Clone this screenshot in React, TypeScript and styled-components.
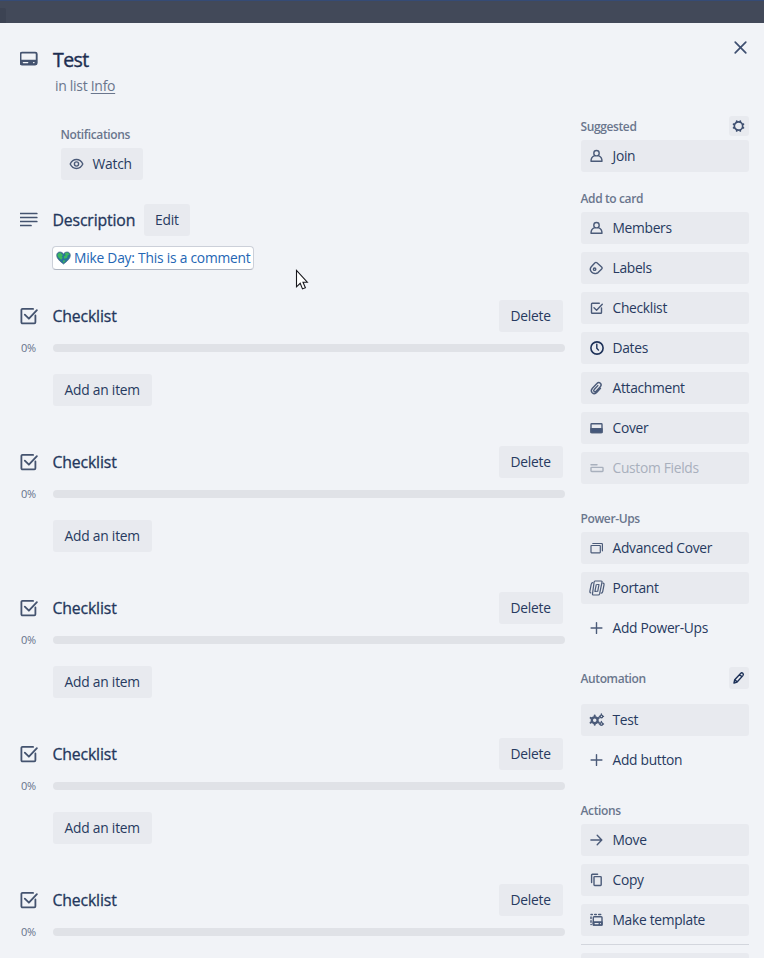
import React from 'react';
import styled, { createGlobalStyle, css } from 'styled-components';

const GlobalStyle = createGlobalStyle`
  *, *::before, *::after { box-sizing: border-box; }
  html, body { margin: 0; padding: 0; }
  body {
    background: #f1f3f7;
    color: #24375c;
    font-family: "Open Sans", "Noto Sans", sans-serif;
    font-size: 13.8px;
    line-height: 20px;
    overflow: hidden;
  }
`;

const Page = styled.div`
  position: relative;
  width: 764px;
  height: 958px;
  overflow: hidden;
  background: #f1f3f7;
`;

const Backdrop = styled.div`
  height: 23px;
  background: #424959;
  border-top: 1px solid #354b76;
`;

const BackdropEdge = styled.div`
  width: 6px;
  height: 15px;
  margin-top: 7px;
  background: #3c4353;
  border-top-right-radius: 2px;
`;

const CardHeader = styled.header`
  height: 94px;
  padding: 22px 16px 0 20px;
  display: flex;
  align-items: flex-start;
`;

const HeaderIcon = styled.div`
  width: 32px;
  padding-top: 6px;
  line-height: 0;
`;

const HeaderText = styled.div`
  flex: 1;
`;

const CardTitle = styled.h1`
  margin: 0;
  height: 30px;
  padding-left: 1px;
  font-size: 19.5px;
  line-height: 30px;
  font-weight: 400;
  letter-spacing: -0.6px;
  color: #1d2e51;
  -webkit-text-stroke: 0.4px #1d2e51;
`;

const ListName = styled.p`
  margin: 1px 0 0 3px;
  font-size: 14px;
  line-height: 20px;
  font-weight: 400;
  letter-spacing: -0.3px;
  color: #6a768d;

  a { color: inherit; text-decoration: underline; text-underline-offset: 2px; }
`;

const CloseButton = styled.button`
  width: 16px;
  height: 16px;
  margin-top: -6px;
  padding: 0;
  border: 0;
  background: none;
  line-height: 0;
`;

const Columns = styled.div`
  display: grid;
  grid-template-columns: 581px 168px;
`;

const Main = styled.main`
  padding: 8px 16px 0 20px;
`;

const Sidebar = styled.aside`
  display: flex;
  flex-direction: column;
`;

const Label = styled.h3`
  margin: 0;
  font-size: 12px;
  line-height: 20px;
  font-weight: 600;
  letter-spacing: -0.38px;
  color: #6a768d;
`;

const Button = styled.button<{ $ghost?: boolean; $disabled?: boolean }>`
  height: 32px;
  padding: 0 11.500px;
  border: 0;
  border-radius: 3px;
  background: ${p => (p.$ghost ? 'transparent' : '#e8eaef')};
  color: ${p => (p.$disabled ? '#a8b0bd' : '#273a60')};
  font: inherit;
  font-weight: 400;
  letter-spacing: -0.22px;
  display: inline-flex;
  align-items: center;
  white-space: nowrap;
`;

const SideButton = styled(Button)`
  display: flex;
  width: 168px;
  padding: 0 8px;
  margin-bottom: 8px;
  gap: 7.500px;
  letter-spacing: -0.3px;

  svg { flex: none; }
`;

const Notifications = styled.section`
  margin-left: 41px;
  height: 79px;

  ${Label} { margin-bottom: 3px; margin-left: -0.5px; }
`;

const WatchButton = styled(Button)`
  width: 82px;
  padding: 0 8px;
  gap: 7.500px;
`;

const SectionHead = styled.div`
  display: grid;
  grid-template-columns: 32.500px auto;
  justify-content: start;
  align-items: center;
  height: 32px;
`;

const SectionTitle = styled.h2`
  margin: 0;
  font-size: 15.800px;
  line-height: 20px;
  font-weight: 400;
  letter-spacing: -0.15px;
  color: #24375c;
  -webkit-text-stroke: 0.3px #24375c;
`;

const TitleRow = styled.div`
  display: grid;
  grid-template-columns: 91.500px 46px;
  align-items: center;
`;

const EditButton = styled(Button)`
  width: 46px;
  padding: 0 11px;
`;

const CommentLink = styled.a`
  display: flex;
  align-items: center;
  gap: 3px;
  width: 202px;
  height: 24px;
  margin: 10px 0 30px 32px;
  padding: 0 3px;
  border: 1px solid #ccd0d9;
  border-bottom-color: #aeb4c0;
  border-radius: 4px;
  background: #fff;
  color: #2466b4;
  letter-spacing: -0.22px;
  white-space: nowrap;

  svg { flex: none; }
`;

const ChecklistBlock = styled.section`
  height: 146px;
`;

const ChecklistHead = styled.div`
  display: flex;
  justify-content: space-between;
  padding-right: 2px;
`;

const DeleteButton = styled(Button)`
  width: 64px;
`;

const Progress = styled.div`
  display: grid;
  grid-template-columns: 33px 512px;
  align-items: center;
  height: 32px;
`;

const Percent = styled.span`
  padding-left: 1px;
  font-size: 11px;
  letter-spacing: -0.2px;
  color: #66728a;
`;

const Track = styled.div`
  height: 8px;
  border-radius: 4px;
  background: #e0e2e7;
`;

const AddItem = styled(Button)`
  width: 99px;
  margin: 10px 0 0 33px;
`;

const Group = styled.section<{ $top: number; $gap: number }>`
  margin-top: ${p => p.$top}px;

  > div:first-child {
    height: 20px;
    margin-bottom: ${p => p.$gap}px;
  }
`;

const GroupHead = styled.div`
  display: flex;
  align-items: center;
  justify-content: space-between;

  ${Label} { margin-left: -0.5px; }
`;

const SquareButton = styled.button<{ $tall?: boolean }>`
  width: 20px;
  height: ${p => (p.$tall ? 22 : 20)}px;
  ${p => css`margin-top: ${p.$tall ? -3 : -2}px;`}
  padding: 0;
  border: 0;
  border-radius: 3px;
  background: #e8eaef;
  display: flex;
  align-items: center;
  justify-content: center;
`;

const Divider = styled.hr`
  width: 168px;
  height: 1px;
  margin: 0 0 8px;
  border: 0;
  background: #d3d6dd;
`;

const Cursor = styled.svg`
  position: absolute;
  left: 295px;
  top: 269px;
`;

const Svg = styled.svg<{ $color?: string }>`
  display: block;
  flex: none;
  fill: none;
  stroke: ${p => p.$color || '#4b5b79'};
  stroke-width: 1.4;
  stroke-linecap: round;
  stroke-linejoin: round;
`;

type IconName =
  | 'eye' | 'person' | 'label' | 'check' | 'clock' | 'clip' | 'cover' | 'fields'
  | 'stack' | 'portant' | 'plus' | 'gears' | 'arrow' | 'copy' | 'template';

const shapes: Record<IconName, React.ReactNode> = {
  eye: (
    <>
      <path d="M1.200 8C2.500 5.200 4.700 3.500 7.500 3.500s5 1.700 6.300 4.500c-1.300 2.800-3.500 4.500-6.300 4.500S2.500 10.800 1.200 8Z" />
      <circle cx="7.500" cy="8" r="2.100" />
    </>
  ),
  person: (
    <>
      <circle cx="7.500" cy="5.200" r="2.700" />
      <path d="M5.600 7.700C3.400 8.500 2 10.500 2 13.300h11c0-2.800-1.400-4.800-3.600-5.600" />
    </>
  ),
  label: (
    <>
      <path d="M2.300 6.800 6 2.800c.5-.6 1.300-.6 1.900-.1l4.700 4.200c.6.600.6 1.400.1 2l-3.600 3.700c-1.800 1.500-4.800 1.200-6.300-.4-1.700-1.700-1.800-3.900-.5-5.400Z" />
      <circle cx="5.600" cy="9.200" r="1.200" />
    </>
  ),
  check: (
    <>
      <path d="M12.500 8v4.400a.8.800 0 0 1-.8.800H3.300a.8.800 0 0 1-.8-.8V4.100a.8.800 0 0 1 .8-.8h7" />
      <path d="m5 7.700 2.600 2.500 5.700-6" />
    </>
  ),
  clock: (
    <g stroke="#1d3158" strokeWidth="1.600">
      <circle cx="8" cy="8" r="6.100" />
      <path d="M7.800 4.300v3.900l1.700 1.900" strokeWidth="1.400" />
    </g>
  ),
  clip: (
    <path d="m11.500 8.400-3.600 3.900c-1.400 1.500-3.400 1.600-4.700.4-1.200-1.200-1.100-3 .2-4.500l4.500-4.700c1-1.100 2.500-1.200 3.500-.3 1 1 .9 2.400-.1 3.500l-4.200 4.500c-.6.700-1.500.7-2 .2s-.5-1.300.1-1.900l3.600-3.900" />
  ),
  cover: (
    <>
      <rect x="2" y="3.700" width="11" height="8.800" rx=".7" />
      <path d="M2 8.800h11v3.700H2z" fill="#43577b" />
    </>
  ),
  fields: (
    <g stroke="#a8b0bd">
      <path d="M2 4.700h6" />
      <rect x="2" y="7.400" width="12" height="4.100" rx=".7" />
    </g>
  ),
  stack: (
    <g strokeWidth="1.200">
      <rect x="2" y="5.500" width="9.300" height="7.300" rx=".5" />
      <path d="M3.800 3.500h8.900a.7.700 0 0 1 .7.700v6.600" />
    </g>
  ),
  portant: (
    <g strokeWidth="1.200">
      <path d="M6 1h6.200c.7 0 1 .5.800 1.200l-2.400 11.700c-.2.700-.6 1.100-1.300 1.100H4.400c-.7 0-1-.5-.9-1.200L5.100 2C5.200 1.300 5.500 1 6 1Z" />
      <path d="M3.700 2.700c-1 0-1.200.5-1.500 1.700L.9 11.200c-.2 1 .1 1.500.9 1.600M14 3.200c.9 0 1.200.6 1 1.600l-1.300 6.800c-.2 1-.7 1.500-1.500 1.600M7.300 4.500 5.900 11.300h1.500M8.500 4.500H10L8.700 11.300" />
    </g>
  ),
  plus: <path d="M7.500 2.600v10.800M2.100 8h10.800" />,
  gears: (
    <>
      <circle cx="5.700" cy="8.200" r="2.900" strokeWidth="2.300" />
      <path d="M5.700 3.600v1M5.700 11.800v1M1.600 5.900l.9.500M8.900 10l1 .6M8.900 6.400l1-.5M2.500 10l-.9.600" strokeWidth="2" />
      <circle cx="12.400" cy="4.400" r="1.300" />
      <circle cx="12.400" cy="11.900" r="1.300" />
      <path d="M12.400 2v.4M10.400 4.400h.2M14.200 4.400h.3M12.400 9.500v.4M10.400 12h.2M14.200 12h.3" />
    </>
  ),
  arrow: <path d="M1.900 8h10.800M8.200 3.300 12.800 8l-4.600 4.700" />,
  copy: (
    <>
      <rect x="5" y="4.600" width="7.200" height="8.900" rx=".7" />
      <path d="M2.600 10.600V3.100c0-.5.300-.8.800-.8H8.600" />
    </>
  ),
  template: (
    <>
      <rect x="4.300" y="4.700" width="8.700" height="8.300" rx=".8" />
      <path d="M4.300 9.900h8.700v3.100H4.300z" fill="#43577b" />
      <path d="M6 11.600h3.200M11.400 11.600h.1" stroke="#e8eaef" strokeWidth="1.100" />
      <path d="M2 2.600h1.300M5.700 2.600h1.600M9.700 2.600h2M2 5v1.500M2 8.700v1.500M2 12.500h.2" strokeWidth="1.500" />
    </>
  ),
};

const Icon = ({ name }: { name: IconName }) => (
  <Svg width="16" height="16" viewBox="0 0 16 16">{shapes[name]}</Svg>
);

const CardIcon = () => (
  <Svg width="18" height="16" viewBox="0.4 0 18 16" $color="#44536f">
    <rect x=".9" y="1.600" width="16.200" height="12" rx="1.500" strokeWidth="1.900" />
    <path d="M1.500 9.500h15v3.600h-15z" fill="#44536f" />
    <path d="M3.800 11.600h4.300M14 11.600h.4" stroke="#f1f3f7" strokeWidth="1.400" />
  </Svg>
);

const LinesIcon = () => (
  <Svg width="18" height="16" viewBox="0.400 0 18 16" $color="#44536f">
    <path d="M1 1.500h16.200M1 5.500h16.200M1 9.500h16.200M1 13.500h10.400" strokeWidth="1.700" />
  </Svg>
);

const ChecklistIcon = () => (
  <Svg width="19" height="18" viewBox="0.400 0 19 18" $color="#44536f">
    <g strokeWidth="1.800">
      <path d="M15.800 8.500v6.700c0 .7-.4 1.100-1.100 1.100H2.900c-.7 0-1.100-.4-1.100-1.100V3c0-.7.400-1.100 1.100-1.100h10.600" />
      <path d="m5.200 7.600 4.100 4.100 8-8.600" />
    </g>
  </Svg>
);

const CloseIcon = () => (
  <Svg width="16" height="16" viewBox="0 0 16 16" $color="#3e4f70">
    <path d="m3.200 3.200 10.600 10.600M13.800 3.200 3.200 13.800" strokeWidth="1.700" />
  </Svg>
);

const GearIcon = () => (
  <Svg width="14" height="14" viewBox="0 0 14 14" $color="#3e4f70">
    <circle cx="6.500" cy="7" r="4.200" strokeWidth="1.700" />
    <path d="M4.700 2.100v.4M8.300 2.100v.4M4.700 11.500v.4M8.300 11.500v.4M1.600 5.200h.4M1.600 8.800h.4M11 5.200h.4M11 8.800h.4" strokeWidth="1.800" />
  </Svg>
);

const PencilIcon = () => (
  <Svg width="14" height="14" viewBox="0 0 14 14" $color="#1d3158">
    <path d="m2 12 .7-3.300 5.900-6.300c.6-.6 1.500-.7 2.200-.1.700.7.700 1.600.1 2.300L5.100 11 2 12ZM7.600 3.600l2.200 2.200M3 8.800l2 2" strokeWidth="1.400" />
  </Svg>
);

const EarthHeart = () => (
  <svg width="15" height="14" viewBox="0 0 15 14">
    <path d="M7.500 13C4 10.400.7 7.600.7 4.300.7 2.300 2 1 3.900 1c1.600 0 2.900.8 3.600 2.200C8.200 1.800 9.500 1 11.100 1c1.900 0 3.200 1.300 3.200 3.300 0 3.300-3.300 6.100-6.800 8.700Z" fill="#28749b" stroke="#426581" strokeWidth=".7" />
    <path d="M1.600 2.900 4 1.600l3 2.500-1.300 1.500 1 1.200-1.500 2L3 7.100 1.500 5ZM9 2l2.700-.4 1.900 1.900-1.800.7L11 7.100l-2.600.7L7.700 5.500l1.800-1ZM7.500 9l2 .7-1.700 2-1-.7Z" fill="#3db95e" />
  </svg>
);

type Item = { icon: IconName; text: string; ghost?: boolean; disabled?: boolean };

const addToCard: Item[] = [
  { icon: 'person', text: 'Members' },
  { icon: 'label', text: 'Labels' },
  { icon: 'check', text: 'Checklist' },
  { icon: 'clock', text: 'Dates' },
  { icon: 'clip', text: 'Attachment' },
  { icon: 'cover', text: 'Cover' },
  { icon: 'fields', text: 'Custom Fields', disabled: true },
];

const powerUps: Item[] = [
  { icon: 'stack', text: 'Advanced Cover' },
  { icon: 'portant', text: 'Portant' },
  { icon: 'plus', text: 'Add Power-Ups', ghost: true },
];

const automation: Item[] = [
  { icon: 'gears', text: 'Test' },
  { icon: 'plus', text: 'Add button', ghost: true },
];

const actions: Item[] = [
  { icon: 'arrow', text: 'Move' },
  { icon: 'copy', text: 'Copy' },
  { icon: 'template', text: 'Make template' },
];

type SideGroupProps = {
  title: string; items: Item[]; top?: number; gap?: number; action?: React.ReactNode;
};

const SideGroup = ({ title, items, top = 0, gap = 3, action }: SideGroupProps) => (
  <Group $top={top} $gap={gap}>
    <GroupHead><Label>{title}</Label>{action}</GroupHead>
    {items.map(item => (
      <SideButton key={item.text} $ghost={item.ghost} $disabled={item.disabled}>
        <Icon name={item.icon} />{item.text}
      </SideButton>
    ))}
  </Group>
);

const Checklist = ({ addable = true }: { addable?: boolean }) => (
  <ChecklistBlock>
    <ChecklistHead>
      <SectionHead><ChecklistIcon /><SectionTitle>Checklist</SectionTitle></SectionHead>
      <DeleteButton>Delete</DeleteButton>
    </ChecklistHead>
    <Progress><Percent>0%</Percent><Track /></Progress>
    {addable && <AddItem>Add an item</AddItem>}
  </ChecklistBlock>
);

export default function App() {
  return (
    <Page>
      <GlobalStyle />
      <Backdrop><BackdropEdge /></Backdrop>
      <CardHeader>
        <HeaderIcon><CardIcon /></HeaderIcon>
        <HeaderText>
          <CardTitle>Test</CardTitle>
          <ListName>in list <a>Info</a></ListName>
        </HeaderText>
        <CloseButton aria-label="Close"><CloseIcon /></CloseButton>
      </CardHeader>
      <Columns>
        <Main>
          <Notifications>
            <Label>Notifications</Label>
            <WatchButton><Icon name="eye" />Watch</WatchButton>
          </Notifications>
          <SectionHead>
            <LinesIcon />
            <TitleRow><SectionTitle>Description</SectionTitle><EditButton>Edit</EditButton></TitleRow>
          </SectionHead>
          <CommentLink><EarthHeart />Mike Day: This is a comment</CommentLink>
          {[1, 2, 3, 4, 5].map(n => <Checklist key={n} addable={n < 5} />)}
        </Main>
        <Sidebar>
          <SideGroup title="Suggested" items={[{ icon: 'person', text: 'Join' }]}
            action={<SquareButton aria-label="Settings"><GearIcon /></SquareButton>} />
          <SideGroup title="Add to card" items={addToCard} top={9} />
          <SideGroup title="Power-Ups" items={powerUps} top={17} />
          <SideGroup title="Automation" items={automation} top={17} gap={15}
            action={<SquareButton $tall aria-label="Edit automation"><PencilIcon /></SquareButton>} />
          <SideGroup title="Actions" items={actions} top={17} />
          <Divider />
          <SideButton aria-label="Archive" />
        </Sidebar>
      </Columns>
      <Cursor width="15" height="23" viewBox="0 0 15 23">
        <path d="M1.500 1.500v16.300l3.700-3.500 2.300 5.600 2.900-1.200L8 13.200h4.300L1.500 1.500Z" fill="#fff" stroke="#17171d" strokeWidth="1.100" />
      </Cursor>
    </Page>
  );
}
